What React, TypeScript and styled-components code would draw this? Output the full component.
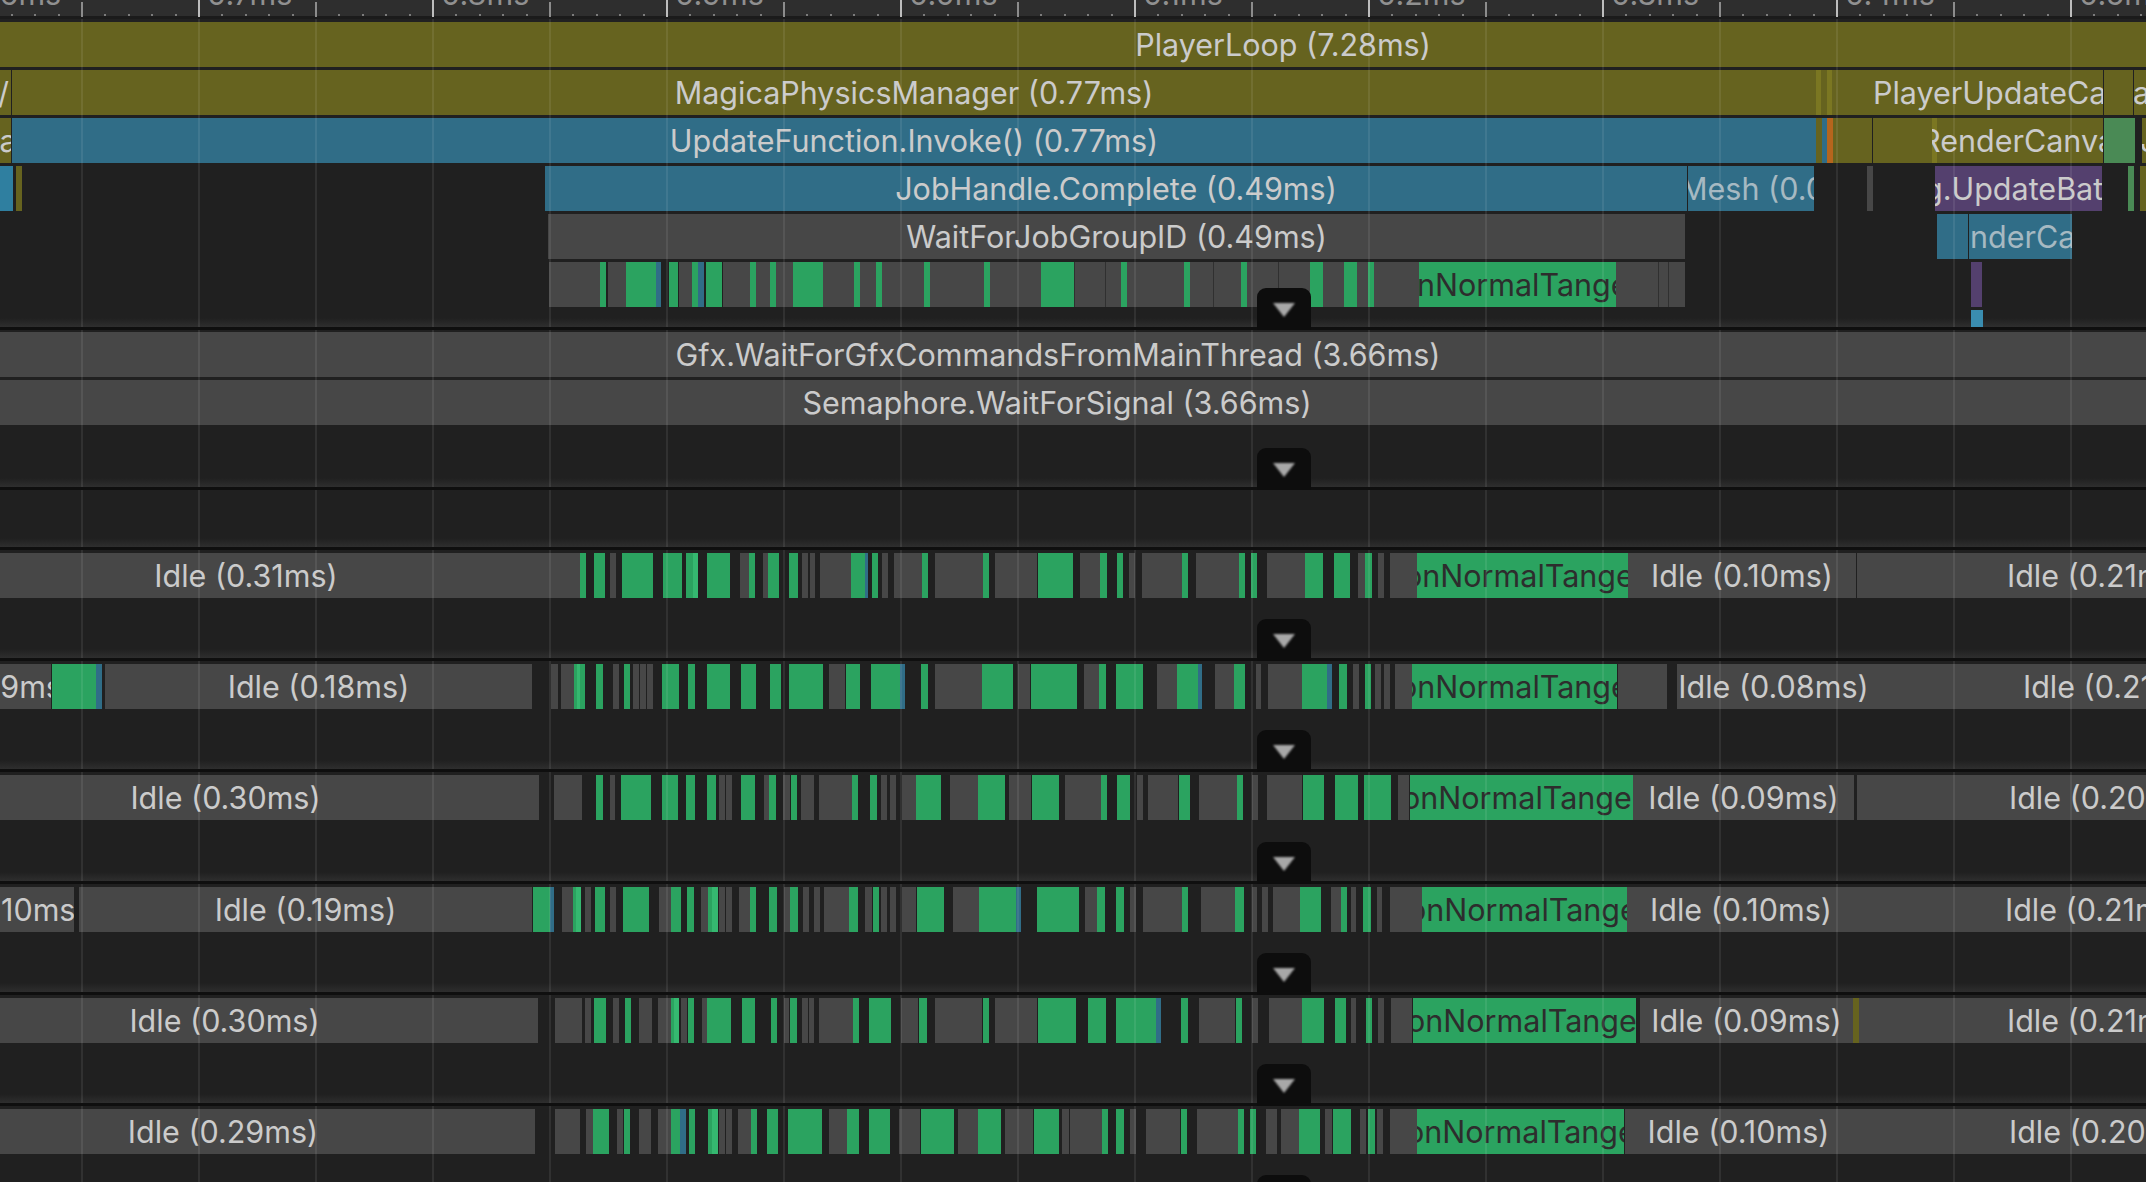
import React from "react";
import styled, { createGlobalStyle } from "styled-components";

const K = 1.4613;
const L = (x: number) => x / K;
const R = (x: number) => 1073 + x / K;

type Seg = { k: string; x0: number; x1: number; t?: string; at?: number; dim?: boolean };

const parse = (spec: string, origin = 0, scale = K): Seg[] =>
  spec
    .trim()
    .split(/\s+/)
    .map((tok) => {
      const [a, b] = tok.slice(1).split("-").map(Number);
      return { k: tok[0], x0: origin + a / scale, x1: origin + b / scale };
    });
const left = (s: string) => parse(s);
const right = (s: string) => parse(s, 1073);
const px = (s: string) => parse(s, 0, 1);

/* a grey sample from x0 to x1 with shorter samples nested over it */
const carve = (x0: number, x1: number, inner: Seg[]): Seg[] => {
  const out: Seg[] = [];
  let cur = x0;
  [...inner]
    .sort((a, b) => a.x0 - b.x0)
    .forEach((s) => {
      if (s.x0 > cur) out.push({ k: "k", x0: cur, x1: s.x0 });
      out.push(s);
      cur = s.x1;
    });
  if (cur < x1) out.push({ k: "k", x0: cur, x1 });
  return out;
};

const FILL: Record<string, string> = {
  o: "#66631f",
  m: "linear-gradient(90deg, #7b7722 0 5px, #66631f 5px)",
  b: "#306d87",
  k: "#474747",
  g: "#2ba360",
  i: "#35b870",
  p: "#54406e",
  c: "#2f7fa0",
  t: "#3a8db0",
  h: "#4a8a55",
  r: "#b5651d",
  l: "#7b7722",
  d: "#202020",
  s: "#303030",
};

const GlobalStyle = createGlobalStyle`
  html, body { margin: 0; padding: 0; background: #202020; }
`;

const Page = styled.div`
  position: relative;
  width: 2146px;
  height: 1182px;
  overflow: hidden;
  background: #202020;
  font-family: Inter, "Noto Sans", sans-serif;
  font-size: 30.5px;
`;

const Ruler = styled.div`
  display: flex;
  height: 22px;
  overflow: hidden;
  background: linear-gradient(#2e2e2e 0 16px, #1b1b1b 16px 19px, #212121 19px);
`;

const RulerCell = styled.div`
  position: relative;
  flex: none;
  width: 117px;
  display: flex;
  align-items: flex-start;
  gap: 21.4px;
  &:first-child {
    margin-left: -36px;
  }
`;

const Tick = styled.i<{ $strong: boolean }>`
  flex: none;
  margin-top: ${(p) => (p.$strong ? 0 : 2)}px;
  width: 2px;
  height: ${(p) => (p.$strong ? 17 : 15)}px;
  background: ${(p) => (p.$strong ? "#bdbdbd" : "#8c8c8c")};
`;

const MinorTick = styled.i`
  flex: none;
  margin-top: 14px;
  width: 2px;
  height: 2px;
  background: #7c7c7c;
`;

const RulerLabel = styled.span`
  position: absolute;
  left: 9px;
  top: -23px;
  line-height: 34px;
  color: #909090;
  white-space: nowrap;
`;

const GridOverlay = styled.div`
  position: absolute;
  inset: 19px 0 0 0;
  z-index: 1;
  pointer-events: none;
  background: repeating-linear-gradient(
    90deg,
    transparent 0 81px,
    rgba(255, 255, 255, 0.08) 81px 83px,
    transparent 83px 117px
  );
`;

const Section = styled.section<{ $height: number; $pad: number }>`
  position: relative;
  height: ${(p) => p.$height}px;
  padding-top: ${(p) => p.$pad}px;
  box-sizing: border-box;
  overflow: hidden;
  display: flex;
  flex-direction: column;
  background: linear-gradient(rgba(46, 46, 46, 0), #2e2e2e) left bottom 3px / 100% 9px no-repeat;
`;

const Row = styled.div`
  flex: none;
  display: flex;
  height: 45px;
  margin-bottom: 3px;
`;

const TailRow = styled(Row)`
  flex: 1 1 0;
  height: auto;
  min-height: 0;
  margin-bottom: 0;
`;

const Bar = styled.div<{ $kind: string; $start: boolean; $dim: boolean }>`
  flex: none;
  display: flex;
  align-items: center;
  justify-content: ${(p) => (p.$start ? "flex-start" : "center")};
  overflow: hidden;
  background: ${(p) => FILL[p.$kind]};
  color: ${(p) => (p.$kind === "g" ? "#2d2d2d" : p.$dim ? "#a6b9c2" : "#cbcbcb")};
`;

const BarText = styled.span`
  flex: none;
  white-space: nowrap;
`;

const Divider = styled.div`
  position: relative;
  flex: none;
  height: 3px;
  margin-top: auto;
  z-index: 2;
  background: #0f0f0f;
`;

const Toggle = styled.div`
  position: absolute;
  left: 1257px;
  bottom: 0;
  width: 54px;
  height: 42px;
  z-index: 2;
  padding-top: 15px;
  box-sizing: border-box;
  display: flex;
  justify-content: center;
  align-items: flex-start;
  background: #0d0d0d;
  border-radius: 9px 9px 0 0;
`;

const Caret = styled.div`
  width: 0;
  height: 0;
  border-left: 11px solid transparent;
  border-right: 11px solid transparent;
  border-top: 14px solid #a8a8a8;
  filter: blur(1px);
`;

const nt = (x0: number, x1: number, at: number): Seg => ({ k: "g", x0, x1, t: "onNormalTangent", at });
const idle = (x0: number, x1: number, t: string, at?: number): Seg => ({ k: "k", x0, x1, t: `Idle (${t})`, at });

const first: Seg[][] = [
  [{ k: "o", x0: 0, x1: 2566, t: "PlayerLoop (7.28ms)" }],
  [
    { k: "o", x0: 0, x1: 11, t: "/", at: -2 },
    { k: "o", x0: 12, x1: 1816, t: "MagicaPhysicsManager (0.77ms)" },
    ...px("l1816-1821 o1821-1827 l1827-1832"),
    { k: "o", x0: 1832, x1: 2103, t: "PlayerUpdateCanvases", at: 1873 },
    ...px("o2104-2133"),
    { k: "o", x0: 2134, x1: 2200, t: "a", at: 2133 },
  ],
  [
    { k: "o", x0: 0, x1: 11, t: "la", at: -8 },
    { k: "b", x0: 12, x1: 1816, t: "UpdateFunction.Invoke() (0.77ms)" },
    ...px("o1816-1822 b1822-1827 r1827-1833 o1833-1872 o1873-1932"),
    { k: "m", x0: 1932, x1: 2103, t: "RenderCanvases", at: 1921 },
    ...px("h2104-2135"),
    { k: "o", x0: 2142, x1: 2200, t: "J", at: 2140 },
  ],
  [
    ...px("c0-13 o16-22"),
    { k: "b", x0: 545, x1: 1687, t: "JobHandle.Complete (0.49ms)" },
    { k: "b", x0: 1688, x1: 1814, t: "Mesh (0.07ms)", at: 1680, dim: true },
    ...px("k1867-1873"),
    { k: "p", x0: 1935, x1: 2102, t: "g.UpdateBatches", at: 1924 },
    ...px("h2128-2134 o2140-2146"),
  ],
  [
    { k: "k", x0: 548, x1: 1685, t: "WaitForJobGroupID (0.49ms)" },
    ...px("b1937-1968"),
    { k: "b", x0: 1969, x1: 2072, t: "nderCanvas", at: 1970, dim: true },
  ],
  [
    ...carve(549, 1685, [
      ...px(
        "g600-606 d606-608 g626-656 b656-661 d661-669 g669-678 d678-679 g692-698 b698-704 d704-706 g706-722 d722-723 g750-756 g770-776 g793-823 g854-860 g876-882 g924-930 g984-990 g1041-1074 s1074-1075 s1105-1106 g1121-1127 g1184-1190 s1213-1214 g1241-1247 s1278-1279 g1310-1323 g1344-1357 g1368-1374 s1658-1659 s1668-1669"
      ),
      { k: "g", x0: 1419, x1: 1616, t: "nNormalTangent", at: 1417 },
    ]),
    ...px("p1971-1982"),
  ],
];

const firstTail: Seg[] = px("t1971-1983");

const second: Seg[][] = [
  [{ k: "k", x0: -84, x1: 2200, t: "Gfx.WaitForGfxCommandsFromMainThread (3.66ms)" }],
  [{ k: "k", x0: -86, x1: 2200, t: "Semaphore.WaitForSignal (3.66ms)" }],
];

const workers: Seg[][] = [
  [
    idle(L(-129), L(848), "0.31ms"),
    ...left(
      "g848-856 g868-884 k891-900 g909-954 g969-996 g1002-1013 i1013-1020 g1033-1067 k1081-1095 g1095-1103 k1115-1122 g1122-1138 g1153-1166 k1172-1181 k1183-1191 k1198-1244 g1244-1264 b1264-1268 g1274-1283 k1289-1298 k1306-1347 g1347-1356 k1366-1436 g1436-1445 k1454-1515 g1517-1568"
    ),
    ...right(
      "k10-39 g39-50 g64-73 k82-91 k101-159 g159-168 k180-243 g243-251 g260-269 k283-339 g339-365 g381-405 k416-427 g427-437 k446-454 k463-502"
    ),
    nt(R(503), R(811), 1404),
    idle(R(811), R(1144), "0.10ms"),
    idle(R(1146), 2300, "0.21ms", 2007),
  ],
  [
    { k: "k", x0: 0, x1: L(75), t: "09ms", at: -19 },
    ...left("g76-141 b141-149"),
    idle(L(153), L(777), "0.18ms"),
    ...left(
      "k805-815 k820-839 g839-843 i843-848 g848-855 g871-881 k896-905 g912-921 k925-934 k935-944 k945-954 g967-992 g1005-1016 g1033-1067 g1083-1105 g1125-1141 g1153-1203 k1211-1235 g1236-1257 g1273-1315 b1315-1322 g1346-1356 k1366-1435 g1435-1480 k1488-1505 g1507-1568"
    ),
    ...right(
      "g0-6 k16-38 g38-48 g63-102 k123-152 g152-182 b182-189 k208-235 g235-251 k267-275 k285-335 g335-371 b371-378 g389-400 k409-418 g427-436 k441-450 k454-463 k471-495"
    ),
    nt(R(495), R(795), 1399),
    ...right("k796-868"),
    idle(R(883), R(1165), "0.08ms"),
    idle(R(1165), 2300, "0.21ms", 2023),
  ],
  [
    idle(L(-129), L(788), "0.30ms"),
    ...left(
      "k810-850 g871-881 k891-899 g907-951 g967-991 g1002-1016 g1033-1046 k1051-1060 k1061-1070 g1083-1103 k1116-1124 g1124-1134 k1144-1154 g1156-1165 k1171-1180 k1181-1190 k1197-1245 g1245-1254 g1271-1282 k1287-1296 k1301-1309 k1318-1338 g1339-1375 k1388-1429 g1429-1469 k1474-1507 g1508-1548 k1556-1568"
    ),
    ...right(
      "k0-41 g41-50 g64-83 k94-102 k110-154 g155-171 k184-239 g240-248 k262-270 k283-335 g336-367 g383-416 g425-465 k475-491"
    ),
    nt(R(492), R(818), 1402),
    idle(R(819), R(1141), "0.09ms"),
    idle(R(1146), 2300, "0.20ms", 2009),
  ],
  [
    { k: "k", x0: 0, x1: L(108), t: "10ms", at: 1 },
    idle(L(115), L(778), "0.19ms"),
    ...left(
      "g779-803 b803-810 k821-837 g837-841 i841-849 k855-864 g869-884 k891-900 g910-948 k963-980 g981-995 g1004-1014 k1024-1034 g1034-1040 i1040-1049 k1051-1060 k1061-1070 k1080-1096 g1096-1105 g1124-1135 k1146-1154 g1154-1166 k1173-1182 k1190-1198 k1204-1241 g1241-1254 k1264-1274 g1276-1285 k1287-1296 k1301-1309 k1318-1339 g1340-1379 k1393-1431 g1431-1485 b1485-1492 g1515-1568"
    ),
    ...right(
      "g0-9 k18-35 g35-47 g63-75 k84-92 k102-159 g159-168 k187-237 g237-250 k261-269 k276-285 k292-331 g332-362 k377-392 g392-400 k406-414 g424-435 k444-452 k463-510"
    ),
    nt(R(510), R(810), 1408),
    idle(R(810), R(1143), "0.10ms"),
    idle(R(1143), 2300, "0.21ms", 2005),
  ],
  [
    idle(L(-130), L(786), "0.30ms"),
    ...left(
      "k811-850 k855-864 g868-886 k896-905 g913-922 k934-953 k962-980 g980-985 i985-992 k995-1004 g1005-1014 k1026-1033 g1033-1068 g1084-1103 g1127-1135 k1145-1153 g1154-1165 k1172-1180 k1182-1190 k1197-1246 g1247-1255 g1270-1302 k1316-1342 g1343-1355 k1366-1435 g1436-1445 k1454-1516 g1517-1568"
    ),
    ...right(
      "g0-4 g22-48 g63-122 b122-129 g158-168 k184-237 g238-247 k262-270 k286-334 g335-367 g383-399 k406-414 g428-437 k446-454 k465-496"
    ),
    nt(R(497), R(823), 1407),
    idle(R(829), R(1140), "0.09ms"),
    ...right("o1140-1148"),
    idle(R(1148), 2300, "0.21ms", 2007),
  ],
  [
    idle(L(-130), L(782), "0.29ms"),
    ...left(
      "k811-848 k856-866 g867-890 k902-911 g912-921 k934-952 k962-981 g981-993 b993-1002 g1007-1016 g1035-1040 i1040-1049 k1051-1060 k1061-1070 k1078-1097 g1097-1106 g1121-1137 g1152-1201 k1211-1237 g1238-1255 g1270-1301 k1314-1345 g1346-1394 k1400-1429 g1429-1463 k1469-1510 g1511-1548 k1552-1562 k1564-1568"
    ),
    ...right(
      "k0-42 g42-51 g63-75 k84-92 k107-157 g158-167 k181-241 g241-250 g259-267 k282-298 k304-330 g330-361 k368-378 g380-406 k419-428 g431-441 k444-453 k463-502"
    ),
    nt(R(503), R(805), 1406),
    idle(R(806), R(1139), "0.10ms"),
    idle(R(1139), 2300, "0.20ms", 2009),
  ],
];

const RULER_LABELS = ["0.6ms", "0.7ms", "0.8ms", "0.9ms", "0.0ms", "0.1ms", "0.2ms", "0.3ms", "0.4ms", "0.5ms"];
const CELLS = Array.from({ length: 20 }, (_, n) => n);
const MINORS = [0, 1, 2, 3];
const HEIGHTS = [111, 111, 112, 111, 111, 111];

const Samples = ({ bars }: { bars: Seg[] }) => {
  let prev = 0;
  return (
    <>
      {bars.map((s, i) => {
        const x0 = Math.round(s.x0);
        const x1 = Math.round(s.x1);
        const gap = x0 - prev;
        prev = x1;
        const start = s.at !== undefined;
        return (
          <Bar
            key={i}
            $kind={s.k}
            $start={start}
            $dim={!!s.dim}
            style={{ width: x1 - x0, marginLeft: gap }}
          >
            {s.t && <BarText style={start ? { marginLeft: (s.at as number) - x0 } : undefined}>{s.t}</BarText>}
          </Bar>
        );
      })}
    </>
  );
};

const Track = ({
  rows,
  tail,
  height,
  pad = 3,
  toggle = true,
}: {
  rows: Seg[][];
  tail?: Seg[];
  height: number;
  pad?: number;
  toggle?: boolean;
}) => (
  <Section $height={height} $pad={pad}>
    {rows.map((bars, i) => (
      <Row key={i}>
        <Samples bars={bars} />
      </Row>
    ))}
    {tail && (
      <TailRow>
        <Samples bars={tail} />
      </TailRow>
    )}
    <Divider />
    {toggle && (
      <Toggle>
        <Caret />
      </Toggle>
    )}
  </Section>
);

export default function App() {
  return (
    <Page>
      <GlobalStyle />
      <Ruler>
        {CELLS.map((n) => (
          <RulerCell key={n}>
            <Tick $strong={n % 2 === 0} />
            {MINORS.map((m) => (
              <MinorTick key={m} />
            ))}
            {n % 2 === 0 && <RulerLabel>{RULER_LABELS[n / 2]}</RulerLabel>}
          </RulerCell>
        ))}
      </Ruler>
      <GridOverlay />
      <Track rows={first} tail={firstTail} height={308} pad={0} />
      <Track rows={second} height={160} pad={2} />
      <Track rows={[]} height={60} toggle={false} />
      {workers.map((bars, i) => (
        <Track key={i} rows={[bars]} height={HEIGHTS[i]} />
      ))}
    </Page>
  );
}
